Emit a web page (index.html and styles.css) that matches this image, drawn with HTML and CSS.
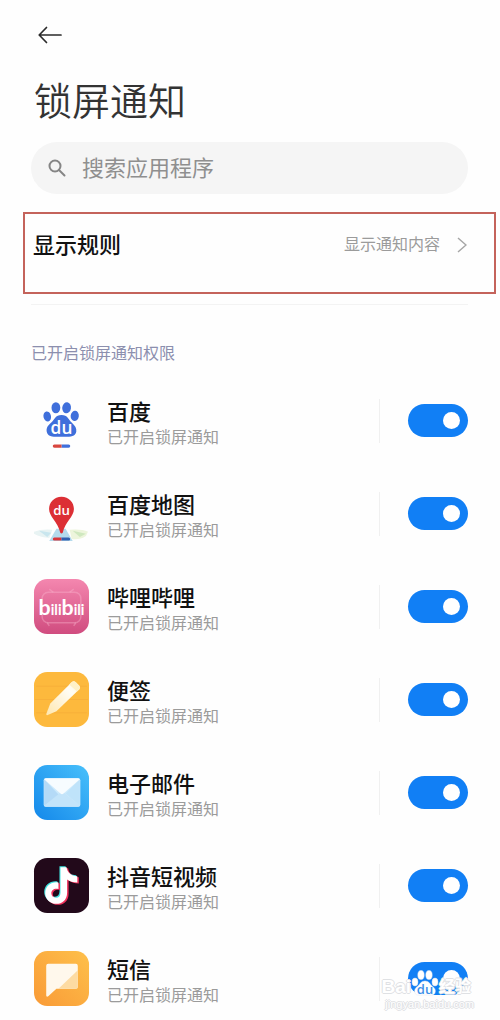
FILE: index.html
```html
<!DOCTYPE html>
<html lang="zh-CN">
  <head>
    <meta charset="utf-8">
    <meta name="viewport" content="width=device-width, initial-scale=1">
    <title>锁屏通知</title>
    <link rel="stylesheet" href="styles.css">
  </head>
  <body>
    <main class="page">
      <header class="header">
        <button class="back" aria-label="返回">
          <svg width="24" height="18" viewBox="0 0 24 18" fill="none" stroke="#2b2b2b" stroke-width="1.7" stroke-linecap="round" stroke-linejoin="round">
            <path d="M23 9H1.500M8.500 1.500L1.200 9l7.300 7.500"/>
          </svg>
        </button>
        <h1>锁屏通知</h1>
      </header>
      <label class="search">
        <svg width="18" height="18" viewBox="0 0 18 18" fill="none" stroke="#858585" stroke-width="2" stroke-linecap="round">
          <circle cx="7" cy="7" r="5.500"/>
          <path d="M11 11l5.500 5.500"/>
        </svg>
        <input type="text" placeholder="搜索应用程序" aria-label="搜索应用程序">
      </label>
      <button class="rule">
        <span class="rule-name">显示规则</span>
        <span class="rule-value">显示通知内容</span>
        <svg width="10" height="16" viewBox="0 0 10 16" fill="none" stroke="#a6a6a6" stroke-width="1.500">
          <path d="M1 1l8 7-8 7"/>
        </svg>
      </button>
      <hr class="divider">
      <h2>已开启锁屏通知权限</h2>
      <ul class="apps">
        <li>
          <svg class="icon" viewBox="0 0 54 54">
            <g fill="#3f6fdb">
              <ellipse cx="13" cy="23" rx="3.700" ry="5" transform="rotate(-12 13 23)"/>
              <ellipse cx="21.500" cy="14.500" rx="4.300" ry="5.500"/>
              <ellipse cx="32" cy="14.500" rx="4.300" ry="5.500" transform="rotate(8 32 14.500)"/>
              <ellipse cx="40" cy="22.500" rx="4" ry="5" transform="rotate(8 40 22.500)"/>
              <path d="M27 21.500c-6 0-7 4.500-10 7.500-4 3.500-5 5.500-4.500 9 1 5.500 7 5 14.500 5s13.500.5 14.500-5c.5-3.500-1-5.500-4.500-9-3-3-4-7.500-10-7.500z"/>
              <path d="M27 50.500h7a1.600 1.600 0 0 1 0 3.200h-7z"/>
            </g>
            <path d="M27 50.500h-7a1.600 1.600 0 0 0 0 3.200h7z" fill="#d8473f"/>
            <text class="logo-text" x="27" y="40.500" font-size="17">du</text>
          </svg>
          <div class="info"><label for="app-1">百度</label><p>已开启锁屏通知</p></div>
          <input class="switch" id="app-1" type="checkbox" checked>
        </li>
        <li>
          <svg class="icon" viewBox="0 0 54 54">
            <path d="M0 45q8-3 18-2l-3 8q-8 0-15-4z" fill="#e8f3f3"/>
            <path d="M5 44l12 2-4 4z" fill="#c9e6ee"/>
            <path d="M35 43q12-1 18 2l-2 4q-6 4-14 3z" fill="#edf5dc"/>
            <path d="M38 44l13 3-6 3z" fill="#cfe8bf"/>
            <path d="M22 42h9l7 12H15z" fill="#b4daec"/>
            <path d="M27 10.500c-7.300 0-12.200 5.500-12.200 12.200 0 7.500 8.400 12.300 11 23.300q1.200 1.500 2.400 0c2.600-11 11-15.800 11-23.300 0-6.700-4.900-12.200-12.200-12.200z" fill="#dc2f35"/>
            <path d="M27 50.500h-7a1.500 1.500 0 0 0 0 3h7z" fill="#d8353b"/>
            <path d="M27 50.500h7a1.500 1.500 0 0 1 0 3h-7z" fill="#315fae"/>
            <text class="logo-text" x="27" y="28" font-size="13">du</text>
          </svg>
          <div class="info"><label for="app-2">百度地图</label><p>已开启锁屏通知</p></div>
          <input class="switch" id="app-2" type="checkbox" checked>
        </li>
        <li>
          <svg class="icon" viewBox="0 0 54 54">
            <defs><linearGradient id="pink" x2="0" y2="1"><stop stop-color="#f487af"/><stop offset="1" stop-color="#d04c7f"/></linearGradient></defs>
            <rect width="54" height="54" rx="13" fill="url(#pink)"/>
            <g fill="none" stroke="#fbb4ce" stroke-opacity=".4" stroke-width="1.500">
              <rect x="8" y="13" width="38" height="30" rx="6"/>
              <path d="M15 10l4 3M39 10l-4 3M13 43l2 3M41 43l-2 3"/>
            </g>
            <text class="logo-text bili" x="27" y="35" font-size="14"><tspan font-size="21">b</tspan>ili<tspan font-size="21">b</tspan>ili</text>
          </svg>
          <div class="info"><label for="app-3">哔哩哔哩</label><p>已开启锁屏通知</p></div>
          <input class="switch" id="app-3" type="checkbox" checked>
        </li>
        <li>
          <svg class="icon" viewBox="0 0 54 54">
            <defs>
              <linearGradient id="pencil" x1="1" x2="0" y2="1"><stop stop-color="#fff7dd"/><stop offset=".3" stop-color="#fffdf5"/><stop offset="1" stop-color="#ffe7ae"/></linearGradient>
            </defs>
            <rect width="54" height="54" rx="13" fill="#fdb93d"/>
            <path d="M2 14h50M1 27h52M2 40h50" stroke="#f8b03a"/>
            <path d="M37 10q2-2 4 0l3.500 3.500q1.500 1.700 0 3.500L22 38.500l-8.500 3.800q-2 .5-1.300-1.500L16 31z" fill="url(#pencil)"/>
            <path d="M37 10q2-2 4 0l3.500 3.500q1.500 1.700 0 3.500l-2.300 2.200-7.700-7z" fill="#fff1c8"/>
          </svg>
          <div class="info"><label for="app-4">便签</label><p>已开启锁屏通知</p></div>
          <input class="switch" id="app-4" type="checkbox" checked>
        </li>
        <li>
          <svg class="icon" viewBox="0 0 54 54">
            <defs><linearGradient id="blue" x1="1" x2="0" y2="1"><stop stop-color="#48c0fb"/><stop offset="1" stop-color="#1488ea"/></linearGradient></defs>
            <rect width="54" height="54" rx="13" fill="url(#blue)"/>
            <rect x="9.500" y="13" width="36" height="28" rx="2" fill="#cdeafc"/>
            <path d="M10 14l15 16L10 40z" fill="#b4daf7"/>
            <path d="M45 14L31 28l14 12z" fill="#bfe3fa"/>
            <path d="M10 40l16-13q1.500-1 3 0l16 13q-1 1-2 1H12q-1.500 0-2-1z" fill="#c3e4fa"/>
            <path d="M10 14q.5-1 2-1h31q1.500 0 2 1L29 28q-1.500 1.500-3 0z" fill="#f7fcff"/>
          </svg>
          <div class="info"><label for="app-5">电子邮件</label><p>已开启锁屏通知</p></div>
          <input class="switch" id="app-5" type="checkbox" checked>
        </li>
        <li>
          <svg class="icon" viewBox="0 0 54 54">
            <defs><path id="note" d="M26 9h6c.5 5 4.500 8.500 10.500 9v6c-4 0-7.500-1-10-3v13c0 7-5 11-10.500 11-6.500 0-11-5-11-10.500 0-7 6-11.500 13-10.500v6.500c-4-1-7 1-7 4.200 0 2.500 2 4.300 4.500 4.300 3 0 4.500-2 4.500-5z"/></defs>
            <rect width="54" height="54" rx="13" fill="#22091a"/>
            <use href="#note" x="-1" y="-1" fill="#3fe3df"/>
            <use href="#note" x="1.500" y="1" fill="#f0325c"/>
            <use href="#note" fill="#fff"/>
          </svg>
          <div class="info"><label for="app-6">抖音短视频</label><p>已开启锁屏通知</p></div>
          <input class="switch" id="app-6" type="checkbox" checked>
        </li>
        <li>
          <svg class="icon" viewBox="0 0 54 54">
            <defs><linearGradient id="orange" x1="1" x2="0" y2="1"><stop stop-color="#fec04b"/><stop offset="1" stop-color="#f99a36"/></linearGradient></defs>
            <rect width="54" height="54" rx="13" fill="url(#orange)"/>
            <path d="M14 12.500h27q2 0 2 2V35q0 2-2 2H22l-8 7.500q-2 1-2-1v-29q0-2 2-2z" fill="#fff8ec"/>
            <path d="M43 19v16q0 2-2 2H24z" fill="#fddba2"/>
          </svg>
          <div class="info"><label for="app-7">短信</label><p>已开启锁屏通知</p></div>
          <input class="switch" id="app-7" type="checkbox" checked>
        </li>
      </ul>
      <div class="watermark">
        <div class="brand">
          <span>Bai</span>
          <svg width="28" height="28" viewBox="0 0 28 28">
            <g fill="#fff" stroke="#e3e7ec" stroke-width=".5">
              <ellipse cx="4" cy="13" rx="3" ry="4"/>
              <ellipse cx="10" cy="6" rx="3.200" ry="4.500"/>
              <ellipse cx="18" cy="6" rx="3.200" ry="4.500"/>
              <ellipse cx="24" cy="13" rx="3" ry="4"/>
              <path d="M14 12c-4 0-5 3-7 5-3 2-4 4-3 7 1 3 5 2 10 2s9 1 10-2c1-3 0-5-3-7-2-2-3-5-7-5z"/>
            </g>
            <text class="logo-text paw-text" x="14" y="25" font-size="13">du</text>
          </svg>
          <span class="brand-cn">经验</span>
        </div>
        <div class="site">jingyan.baidu.com</div>
      </div>
    </main>
  </body>
</html>
```

FILE: styles.css
```css
* {
  box-sizing: border-box;
}
body {
  margin: 0;
  background: #fefefe;
  color: #111;
  font-family: "Noto Sans CJK SC", sans-serif;
}
button,
input {
  font-family: inherit;
}
h1,
h2,
p {
  margin: 0;
}
.page {
  position: relative;
}
.header {
  padding: 20px 32px 0 34px;
}
.back {
  display: flex;
  align-items: center;
  height: 30px;
  padding: 0 4px;
  border: none;
  background: none;
}
h1 {
  margin-top: 22px;
  color: #333;
  font-size: 38px;
  font-weight: 350;
  line-height: 54px;
}
.search {
  display: flex;
  align-items: center;
  gap: 16px;
  height: 52px;
  margin: 16px 32px 0 31px;
  padding: 0 17px;
  border-radius: 26px;
  background: #f5f5f5;
}
.search input {
  flex: 1;
  min-width: 0;
  padding: 0 0 4px;
  border: none;
  outline: none;
  background: none;
  font-size: 22px;
}
.search input::placeholder {
  color: #8f8f8f;
}
.rule {
  display: flex;
  align-items: center;
  width: calc(100% - 27px);
  height: 82px;
  margin: 18px 4px 0 23px;
  padding: 0 27px 16px 8px;
  border: 2px solid #c4635b;
  background: none;
  text-align: left;
}
.rule-name,
.rule-value {
  padding-bottom: 4px;
}
.rule-name {
  flex: 1;
  color: #111;
  font-size: 22px;
  font-weight: 500;
}
.rule-value {
  margin-right: 17px;
  color: #9b9b9b;
  font-size: 16px;
}
.divider {
  height: 1px;
  margin: 10px 32px 0 31px;
  border: none;
  background: #f3f3f3;
}
h2 {
  margin: 35px 32px 0 31px;
  color: #8c8fae;
  font-size: 16px;
  font-weight: 400;
  line-height: 24px;
}
.apps {
  margin: 0;
  padding: 10px 32px 0 34px;
  list-style: none;
}
.apps li {
  display: flex;
  align-items: center;
  height: 93px;
}
.icon {
  width: 55px;
  height: 55px;
  overflow: visible;
}
.logo-text {
  fill: #fff;
  font-family: "Open Sans", sans-serif;
  font-weight: 600;
  text-anchor: middle;
}
.bili {
  font-family: Lato, sans-serif;
  font-weight: 700;
}
.info {
  flex: 1;
  margin: 0 28px 0 18px;
  background: linear-gradient(#f0f0f0, #f0f0f0) right center / 1px 44px no-repeat;
}
.info label {
  display: block;
  font-size: 22px;
  font-weight: 500;
  line-height: 30px;
}
.info p {
  color: #9b9b9b;
  font-size: 16px;
  line-height: 22px;
}
.switch {
  width: 60px;
  height: 33px;
  margin: 0;
  padding: 8px;
  border-radius: 17px;
  background: #ccc;
  appearance: none;
}
.switch::before {
  content: "";
  display: block;
  width: 17px;
  height: 17px;
  border-radius: 50%;
  background: #fff;
}
.switch:checked {
  background: #117ff5;
}
.switch:checked::before {
  margin-left: auto;
}
.watermark {
  position: absolute;
  right: 26px;
  bottom: 14px;
  color: #fff;
  font-family: "Liberation Sans", "Noto Sans CJK SC", sans-serif;
  text-align: right;
  text-shadow: 1px 0 #dfe1e4, -1px 0 #dfe1e4, 0 1px #dfe1e4, 0 -1px #dfe1e4;
}
.brand {
  display: flex;
  align-items: flex-end;
  justify-content: flex-end;
  padding-right: 3px;
  font-size: 19px;
  font-weight: 700;
  line-height: 20px;
}
.brand-cn {
  font-size: 16px;
}
.paw-text {
  fill: #3d8fe8;
  text-shadow: none;
}
.site {
  font-size: 11px;
  line-height: 14px;
}
```
